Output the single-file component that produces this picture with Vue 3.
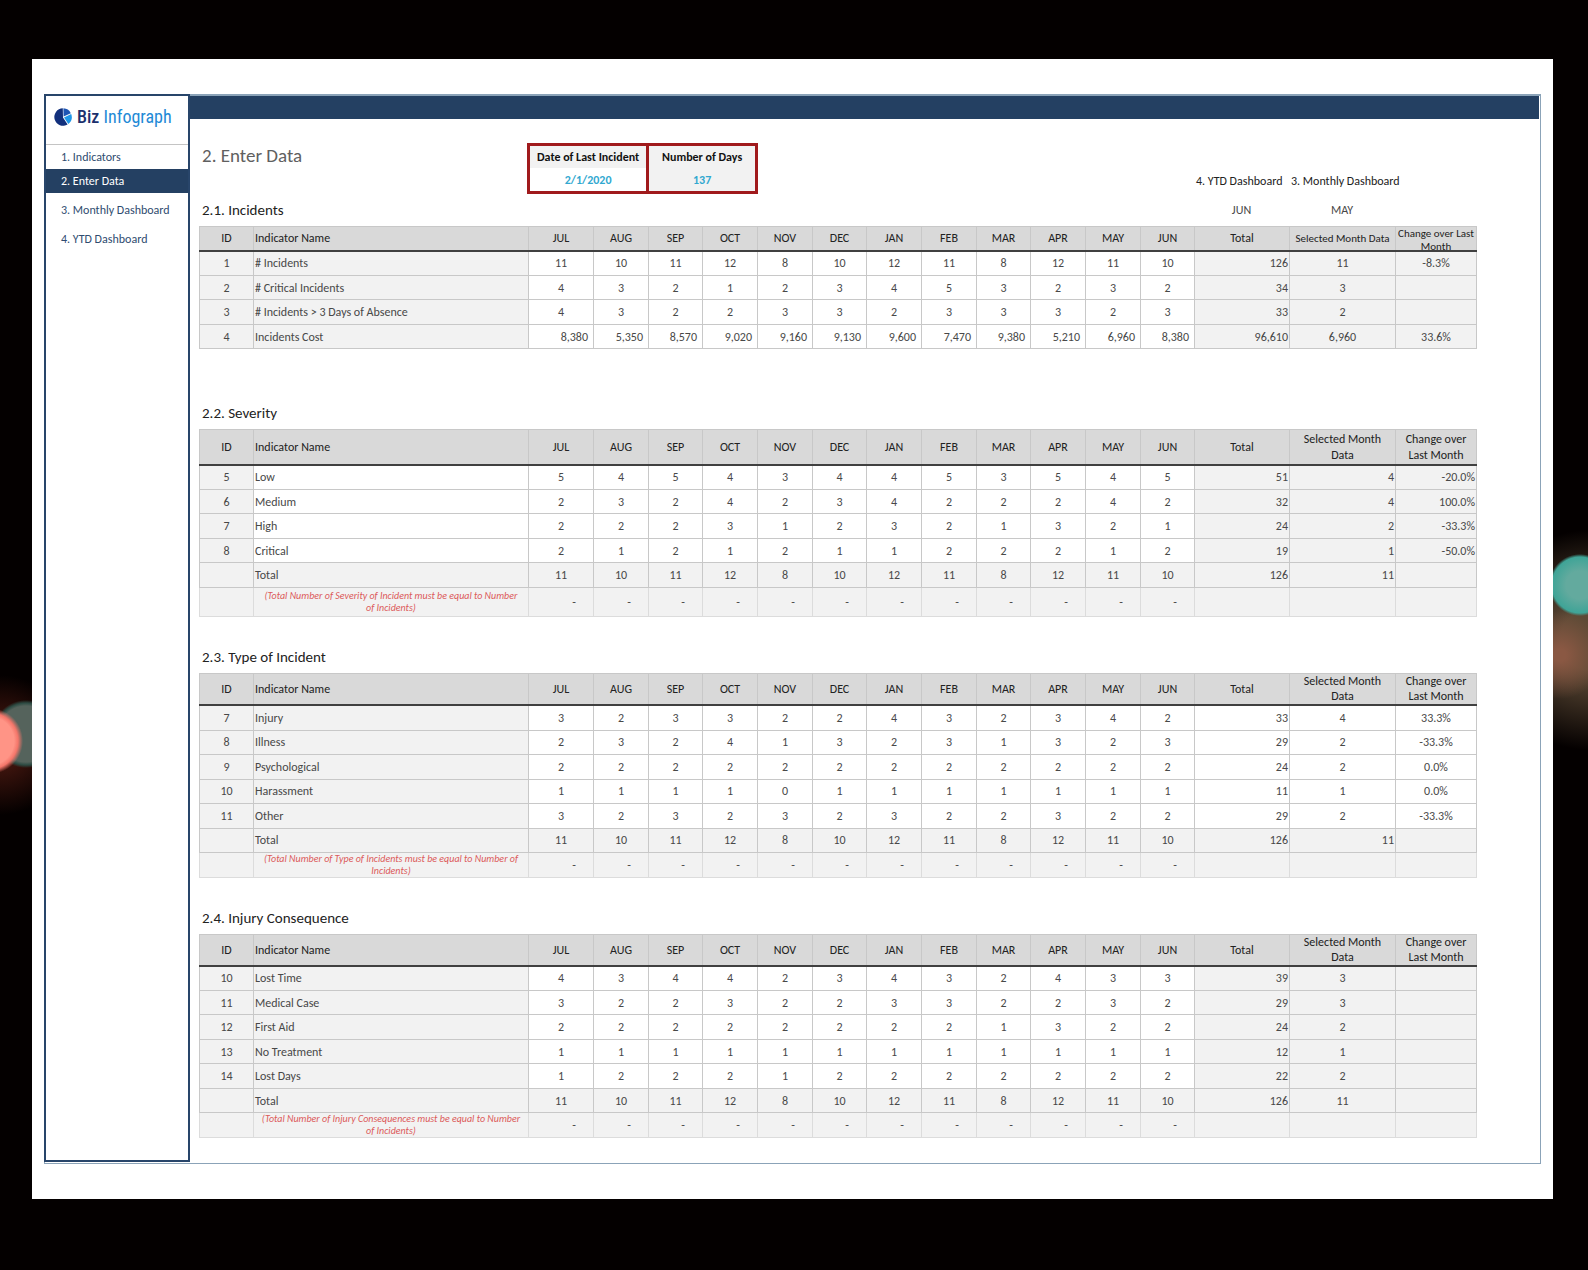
<template>
  <div class="backdrop">
    <div class="page">
      <div class="frame">
        <aside class="sidebar">
          <div class="logo">
            <svg class="logo-mark" viewBox="0 0 18 18" aria-hidden="true">
              <path d="M8.8 .3A8.7 8.7 0 1 0 13.6 16.4L9 9.4Z" fill="#12307c" />
              <path d="M9.4 .3A8.6 8.6 0 0 1 16.8 5.2L9.6 8.6Z" fill="#1d55b4" />
              <path d="M17.2 6A8.7 8.7 0 0 1 14.3 15.9L10 9.4Z" fill="#1f97e8" />
            </svg>
            <span class="logo-text"><b>Biz</b> Infograph</span>
          </div>
          <nav>
            <a
              v-for="item in menu"
              :key="item"
              href="#"
              :class="{ active: item === current }"
            >{{ item }}</a>
          </nav>
        </aside>

        <main>
          <div class="top-bar"></div>
          <div class="content">
            <header class="columns">
              <h1>{{ current }}</h1>
              <table class="last-incident">
                <thead>
                  <tr>
                    <th>Date of Last Incident</th>
                    <th>Number of Days</th>
                  </tr>
                </thead>
                <tbody>
                  <tr>
                    <td class="entry">2/1/2020</td>
                    <td>137</td>
                  </tr>
                </tbody>
              </table>
              <a class="jump ytd" href="#">4. YTD Dashboard</a>
              <a class="jump" href="#">3. Monthly Dashboard</a>
            </header>

            <section v-for="s in sections" :key="s.title" :class="s.kind">
              <div class="columns">
                <h2>{{ s.title }}</h2>
                <template v-if="s.kind === 'incidents'">
                  <span class="period ytd">JUN</span>
                  <span class="period">MAY</span>
                </template>
              </div>
              <table class="data">
                <colgroup>
                  <col class="c-id" />
                  <col class="c-name" />
                  <col class="c-first" />
                  <col v-for="m in 11" :key="m" :class="m % 3 === 2 ? 'c-narrow' : 'c-month'" />
                  <col class="c-total" />
                  <col class="c-selected" />
                  <col class="c-change" />
                </colgroup>
                <thead>
                  <tr>
                    <th>ID</th>
                    <th class="name">Indicator Name</th>
                    <th v-for="m in months" :key="m">{{ m }}</th>
                    <th>Total</th>
                    <th class="wrap"><span>Selected Month Data</span></th>
                    <th class="wrap"><span>Change over Last Month</span></th>
                  </tr>
                </thead>
                <tbody>
                  <tr v-for="row in s.rows" :key="row.name" :class="{ cost: row.cost, sum: !row.id }">
                    <td class="id">{{ row.id }}</td>
                    <td class="name">{{ row.name }}</td>
                    <td v-for="(v, i) in row.values" :key="i" class="month">{{ v }}</td>
                    <td class="total">{{ row.total }}</td>
                    <td class="selected">{{ row.selected }}</td>
                    <td class="change">{{ row.change }}</td>
                  </tr>
                  <tr v-if="s.note" class="check">
                    <td></td>
                    <td class="note">{{ s.note }}</td>
                    <td v-for="m in months" :key="m" class="month">-</td>
                    <td></td>
                    <td></td>
                    <td></td>
                  </tr>
                </tbody>
              </table>
            </section>
          </div>
        </main>
      </div>
    </div>
  </div>
</template>

<script setup>
import { ref } from 'vue'

const menu = ['1. Indicators', '2. Enter Data', '3. Monthly Dashboard', '4. YTD Dashboard']
const current = ref('2. Enter Data')

const months = ['JUL', 'AUG', 'SEP', 'OCT', 'NOV', 'DEC', 'JAN', 'FEB', 'MAR', 'APR', 'MAY', 'JUN']

// values are given JUL..JUN, separated by spaces
function row(id, name, values, total, selected, change = '') {
  return { id, name, values: values.split(' '), total, selected, change, cost: name === 'Incidents Cost' }
}

const monthlyTotals = '11 10 11 12 8 10 12 11 8 12 11 10'

const sections = [
  {
    kind: 'incidents',
    title: '2.1. Incidents',
    rows: [
      row(1, '# Incidents', monthlyTotals, '126', '11', '-8.3%'),
      row(2, '# Critical Incidents', '4 3 2 1 2 3 4 5 3 2 3 2', '34', '3'),
      row(3, '# Incidents > 3 Days of Absence', '4 3 2 2 3 3 2 3 3 3 2 3', '33', '2'),
      row(4, 'Incidents Cost', '8,380 5,350 8,570 9,020 9,160 9,130 9,600 7,470 9,380 5,210 6,960 8,380', '96,610', '6,960', '33.6%')
    ]
  },
  {
    kind: 'severity',
    title: '2.2. Severity',
    rows: [
      row(5, 'Low', '5 4 5 4 3 4 4 5 3 5 4 5', '51', '4', '-20.0%'),
      row(6, 'Medium', '2 3 2 4 2 3 4 2 2 2 4 2', '32', '4', '100.0%'),
      row(7, 'High', '2 2 2 3 1 2 3 2 1 3 2 1', '24', '2', '-33.3%'),
      row(8, 'Critical', '2 1 2 1 2 1 1 2 2 2 1 2', '19', '1', '-50.0%'),
      row('', 'Total', monthlyTotals, '126', '11')
    ],
    note: '(Total Number of Severity of Incident must be equal to Number of Incidents)'
  },
  {
    kind: 'type',
    title: '2.3. Type of Incident',
    rows: [
      row(7, 'Injury', '3 2 3 3 2 2 4 3 2 3 4 2', '33', '4', '33.3%'),
      row(8, 'Illness', '2 3 2 4 1 3 2 3 1 3 2 3', '29', '2', '-33.3%'),
      row(9, 'Psychological', '2 2 2 2 2 2 2 2 2 2 2 2', '24', '2', '0.0%'),
      row(10, 'Harassment', '1 1 1 1 0 1 1 1 1 1 1 1', '11', '1', '0.0%'),
      row(11, 'Other', '3 2 3 2 3 2 3 2 2 3 2 2', '29', '2', '-33.3%'),
      row('', 'Total', monthlyTotals, '126', '11')
    ],
    note: '(Total Number of Type of Incidents must be equal to Number of Incidents)'
  },
  {
    kind: 'consequence',
    title: '2.4. Injury Consequence',
    rows: [
      row(10, 'Lost Time', '4 3 4 4 2 3 4 3 2 4 3 3', '39', '3'),
      row(11, 'Medical Case', '3 2 2 3 2 2 3 3 2 2 3 2', '29', '3'),
      row(12, 'First Aid', '2 2 2 2 2 2 2 2 1 3 2 2', '24', '2'),
      row(13, 'No Treatment', '1 1 1 1 1 1 1 1 1 1 1 1', '12', '1'),
      row(14, 'Lost Days', '1 2 2 2 1 2 2 2 2 2 2 2', '22', '2'),
      row('', 'Total', monthlyTotals, '126', '11')
    ],
    note: '(Total Number of Injury Consequences must be equal to Number of Incidents)'
  }
]
</script>

<style>
body {
  margin: 0;
  background: #040000;
}
</style>

<style scoped>
.backdrop {
  box-sizing: border-box;
  min-height: 100vh;
  padding: 59px 35px 70px 32px;
  background:
    radial-gradient(circle at -10px 741px, #ff9486 24px, #f4766a 28px, transparent 33px),
    radial-gradient(circle at 26px 734px, #55635c 28px, #2c4a42 31px, transparent 34px),
    radial-gradient(circle at 0 745px, #40150e 20px, transparent 70px),
    radial-gradient(circle at 1580px 585px, #63aa9e 14px, #3fa497 28px, transparent 31px),
    radial-gradient(circle at 1560px 655px, #8a5843 6px, transparent 44px),
    radial-gradient(circle at 1590px 640px, #5d4a36 30px, transparent 110px),
    #040000;
  font-family: Carlito, Calibri, Lato, sans-serif;
  font-size: 12px;
  color: #484848;
}

.page {
  padding: 35px 12px;
  background: #fff;
}

.frame {
  display: flex;
  border: 1px solid #8ba3b8;
  border-top-width: 2px;
}

.sidebar {
  box-sizing: border-box;
  flex: 0 0 146px;
  margin: -2px 0 1px -1px;
  border: 2px solid #28456a;
}

.logo {
  display: flex;
  align-items: center;
  gap: 5px;
  height: 49px;
  box-sizing: border-box;
  padding: 0 0 7px 8px;
  border-bottom: 1px solid #c4c4c4;
}

.logo-mark {
  width: 18px;
  height: 18px;
}

.logo-text {
  font: 18px "Roboto Condensed", Roboto, sans-serif;
  color: #1f8ad6;
  white-space: nowrap;
}

.logo-text b {
  font-weight: 500;
  color: #1c2f6c;
}

nav {
  display: flex;
  flex-direction: column;
}

nav a {
  padding-left: 15px;
  line-height: 24px;
  color: #2f4c70;
  text-decoration: none;
}

nav a.active {
  background: #244062;
  color: #fff;
}

nav a.active ~ a {
  margin-top: 5px;
}

main {
  flex: 1;
  min-width: 0;
}

.top-bar {
  height: 23px;
  margin-right: 1px;
  background: #244062;
}

.content {
  padding: 24px 64px 25px 9px;
}

/* same proportions as the data table columns */
.columns {
  display: grid;
  grid-template-columns: 328fr 231fr 436fr 95fr 106fr 81fr;
}

.columns > * {
  min-width: 0;
}

h1,
h2 {
  margin: 0;
  padding-left: 3px;
  font-weight: 400;
}

h1 {
  font-size: 19px;
  line-height: 26px;
  color: #606060;
}

h2 {
  font-size: 15px;
  line-height: 32px;
  color: #222;
}

.last-incident {
  border-collapse: collapse;
  table-layout: fixed;
  width: 100%;
  text-align: center;
  font-weight: 700;
}

.last-incident th,
.last-incident td {
  height: 23px;
  padding: 0;
  background: #f2f2f2;
  border: 3px solid #a01a1c;
}

.last-incident th {
  height: 22px;
  border-bottom: none;
  color: #111;
  white-space: nowrap;
}

.last-incident th:first-child {
  width: 51%;
}

.last-incident td {
  border-top: none;
  color: #31a8d0;
}

.last-incident td.entry {
  background: #fff;
}

.jump {
  align-self: end;
  padding-left: 2px;
  line-height: 26px;
  color: #222;
  text-decoration: none;
  white-space: nowrap;
}

.ytd {
  grid-column: 4;
}

.period {
  text-align: center;
  line-height: 32px;
}

section + section {
  margin-top: 24px;
}

section.incidents + section {
  margin-top: 48px;
}

.data {
  width: 100%;
  border-collapse: collapse;
  table-layout: fixed;
  text-align: center;
}

.c-id { width: 54px; }
.c-name { width: 275px; }
.c-first { width: 65px; }
.c-month { width: 55px; }
.c-narrow { width: 54px; }
.c-total { width: 95px; }
.c-selected { width: 106px; }
.c-change { width: 81px; }

.data th,
.data td {
  box-sizing: border-box;
  padding: 0;
  border: 1px solid #c8c8c8;
  line-height: 16px;
}

.data th {
  height: 31px;
  background: #d9d9d9;
  border-bottom: 2px solid #404040;
  font-weight: 400;
  color: #222;
}

.data th.wrap {
  line-height: 15px;
}

.data th.wrap span {
  display: block;
  padding: 0 8px;
}

.severity .data th {
  height: 35px;
}

.severity .data th.wrap {
  line-height: 16px;
}

.incidents .data th {
  height: 24px;
}

.incidents .data th.wrap {
  font-size: 11px;
  line-height: 13px;
}

/* two lines are taller than this low header row */
.incidents .data th.wrap span {
  max-height: 22px;
  padding: 0;
}

.data td {
  height: 24px;
  background: #f2f2f2;
}

/* the grid alternates 25 and 24 pixel rows */
.data tbody tr:nth-child(odd) td {
  height: 25px;
}

.data td.month {
  background: #fff;
}

.data tr.sum td.month,
.data tr.check td.month {
  background: #f2f2f2;
}

.data .name {
  padding-left: 1px;
  text-align: left;
}

.data td.total {
  padding-right: 1px;
  text-align: right;
}

.data .cost td.month {
  padding-right: 5px;
  text-align: right;
}

.severity tr:not(.sum) td.name,
.type tr:not(.sum) td.total,
.type tr:not(.sum) td.selected,
.type tr:not(.sum) td.change {
  background: #fff;
}

.severity td.selected,
.severity td.change,
.type .sum td.selected {
  padding-right: 1px;
  text-align: right;
}

.data tbody .check td {
  height: 25px;
  border-color: #dcdcdc;
}

.severity .data tbody .check td {
  height: 29px;
}

.data .check td.month {
  padding-right: 17px;
  text-align: right;
}

.data td.note {
  padding: 0 6px;
  font-size: 10px;
  font-style: italic;
  line-height: 12px;
  color: #dc5a5a;
}
</style>
